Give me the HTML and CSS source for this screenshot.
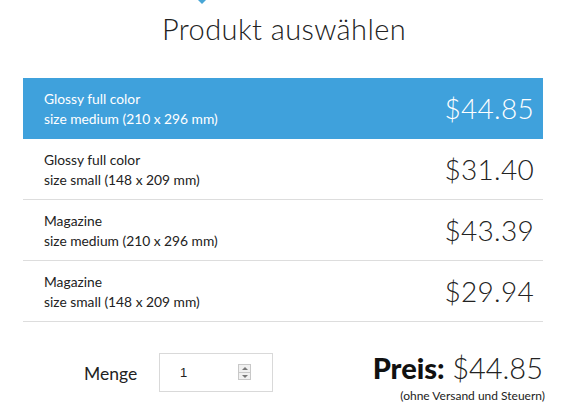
FILE: index.html
```html
<!DOCTYPE html>
<html lang="de">
<head>
<meta charset="utf-8">
<link rel="stylesheet" href="styles.css">
</head>
<body>
<div class="page">
  <div class="notch"></div>
  <h1 class="title">Produkt auswählen</h1>
  <div class="list">
    <div class="row active">
      <div class="desc">Glossy full color<br>size medium (210 x 296 mm)</div>
      <div class="price">$44.85</div>
    </div>
    <div class="row">
      <div class="desc">Glossy full color<br>size small (148 x 209 mm)</div>
      <div class="price">$31.40</div>
    </div>
    <div class="row">
      <div class="desc">Magazine<br>size medium (210 x 296 mm)</div>
      <div class="price">$43.39</div>
    </div>
    <div class="row">
      <div class="desc">Magazine<br>size small (148 x 209 mm)</div>
      <div class="price">$29.94</div>
    </div>
  </div>
  <div class="footer">
    <div class="qty">
      <span class="qty-label">Menge</span>
      <div class="qty-box">
        <span class="qty-val">1</span>
        <span class="spin"><span class="up"></span><span class="down"></span></span>
      </div>
    </div>
    <div class="total">
      <div class="total-line"><b>Preis:</b> <span class="total-val">$44.85</span></div>
      <div class="note">(ohne Versand und Steuern)</div>
    </div>
  </div>
</div>
</body>
</html>
```
FILE: styles.css
```css
html, body { margin: 0; padding: 0; background: #fff; }
body { font-family: Lato, "Open Sans", sans-serif; color: #222; }
.page { width: 574px; height: 417px; position: relative; overflow: hidden; }
.notch {
  position: absolute; left: 198px; top: 0;
  width: 0; height: 0;
  border-left: 4px solid transparent; border-right: 4px solid transparent;
  border-top: 4px solid #48a6d6;
}
.title {
  margin: 0; padding: 11px 6px 0 0; height: 78px; box-sizing: border-box;
  text-align: center; font-weight: 300; font-size: 29px; line-height: 36px;
  color: #222; letter-spacing: 0.4px;
}
.list { margin-left: 23px; width: 520px; }
.row {
  display: flex; justify-content: space-between; align-items: center;
  height: 61px; box-sizing: border-box; padding: 0 9px 0 21px;
  border-bottom: 1px solid #ddd;
}
.row.active { background: #3fa1dc; color: #fff; border-bottom-color: #3fa1dc; }
.desc { font-size: 13.8px; line-height: 20px; padding-top: 1px; }
.price { font-size: 28px; font-weight: 300; letter-spacing: 0.3px; }
.row .price { color: #222; }
.row.active .price { color: #fff; }
.footer { display: flex; justify-content: space-between; margin: 30px 31px 0 84px; }
.qty { display: flex; align-items: center; height: 40px; }
.qty-label { font-size: 17.5px; width: 75px; color: #222; padding-top: 3px; }
.qty-box {
  width: 114px; height: 39px; box-sizing: border-box;
  border: 1px solid #d9d9d9; display: flex; align-items: center;
  padding-left: 20px; font-family: "Liberation Sans", Arial, sans-serif;
  font-size: 13px; color: #222;
}
.qty-val { width: 58px; }
.spin {
  display: flex; flex-direction: column; width: 13px; height: 16px;
  border: 1px solid #c8c8c8; box-sizing: border-box; background: #f0f0f0;
}
.spin span { flex: 1; position: relative; }
.spin .up { border-bottom: 1px solid #c8c8c8; }
.spin .up::after, .spin .down::after {
  content: ""; position: absolute; left: 3px; width: 0; height: 0;
  border-left: 3px solid transparent; border-right: 3px solid transparent;
}
.spin .up::after { top: 2px; border-bottom: 3px solid #777; }
.spin .down::after { top: 2px; border-top: 3px solid #777; }
.total { text-align: right; margin-top: -1px; }
.total-line { font-size: 29px; line-height: 34px; color: #111; }
.total-line b { font-weight: 900; }
.total-val { font-weight: 300; color: #222; }
.note { font-size: 12px; margin-top: 3px; color: #222; margin-right: -2px; }
```
